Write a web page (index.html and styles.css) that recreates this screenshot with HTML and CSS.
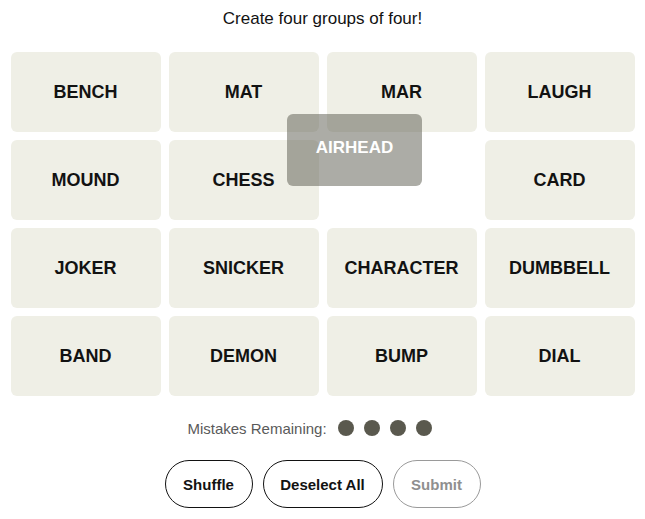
FILE: index.html
```html
<!DOCTYPE html>
<html lang="en">
<head>
<meta charset="utf-8">
<title>Connections</title>
<link rel="stylesheet" href="styles.css">
</head>
<body>
<main class="game">
  <p class="title">Create four groups of four!</p>
  <div class="board">
    <div class="tile">BENCH</div>
    <div class="tile">MAT</div>
    <div class="tile">MAR</div>
    <div class="tile">LAUGH</div>
    <div class="tile">MOUND</div>
    <div class="tile">CHESS</div>
    <div class="slot"></div>
    <div class="tile">CARD</div>
    <div class="tile">JOKER</div>
    <div class="tile">SNICKER</div>
    <div class="tile">CHARACTER</div>
    <div class="tile">DUMBBELL</div>
    <div class="tile">BAND</div>
    <div class="tile">DEMON</div>
    <div class="tile">BUMP</div>
    <div class="tile">DIAL</div>
  </div>
  <div class="mistakes">
    <span class="mistakes-label">Mistakes Remaining:</span>
    <span class="dots"><span class="dot"></span><span class="dot"></span><span class="dot"></span><span class="dot"></span></span>
  </div>
  <div class="actions">
    <button class="btn btn-shuffle">Shuffle</button>
    <button class="btn btn-deselect">Deselect All</button>
    <button class="btn btn-submit" disabled>Submit</button>
  </div>
  <div class="dragging">AIRHEAD</div>
</main>
</body>
</html>
```
FILE: styles.css
```css
html, body {
  margin: 0;
  padding: 0;
  background: #ffffff;
}
body {
  font-family: "Liberation Sans", Arial, sans-serif;
  color: #000;
}
.game {
  position: relative;
  width: 645px;
  height: 519px;
  display: flex;
  flex-direction: column;
  align-items: center;
}
.title {
  margin: 0;
  padding-top: 9px;
  line-height: 20px;
  font-size: 17px;
  color: #121212;
}
.board {
  margin-top: 23px;
  display: grid;
  grid-template-columns: repeat(4, 150px);
  grid-auto-rows: 80px;
  gap: 8px;
}
.tile {
  background: #efefe6;
  border-radius: 6px;
  display: flex;
  align-items: center;
  justify-content: center;
  font-weight: bold;
  font-size: 18px;
  color: #121212;
}
.slot {
  background: transparent;
}
.mistakes {
  margin-top: 20px;
  height: 24px;
  display: flex;
  align-items: center;
  gap: 11px;
  font-size: 15px;
  color: #5a5a5a;
  padding-right: 26px;
}
.dots {
  display: flex;
  gap: 10px;
}
.dot {
  width: 16px;
  height: 16px;
  border-radius: 50%;
  background: #5a594e;
}
.actions {
  margin-top: 20px;
  display: flex;
  gap: 10px;
}
.btn {
  height: 48px;
  border-radius: 24px;
  border: 1px solid #121212;
  background: #fff;
  font-family: "Liberation Sans", Arial, sans-serif;
  font-weight: bold;
  font-size: 15px;
  color: #121212;
  padding: 0;
}
.btn-shuffle { width: 88px; }
.btn-deselect { width: 120px; }
.btn-submit {
  width: 88px;
  border-color: #9a9a9a;
  color: #8f8f8f;
}
.dragging {
  position: absolute;
  left: 287px;
  top: 114px;
  width: 135px;
  height: 72px;
  border-radius: 6px;
  background: rgba(90, 89, 78, 0.5);
  color: #ffffff;
  font-weight: bold;
  font-size: 17px;
  display: flex;
  align-items: center;
  justify-content: center;
  padding-bottom: 4px;
  box-sizing: border-box;
}
```
